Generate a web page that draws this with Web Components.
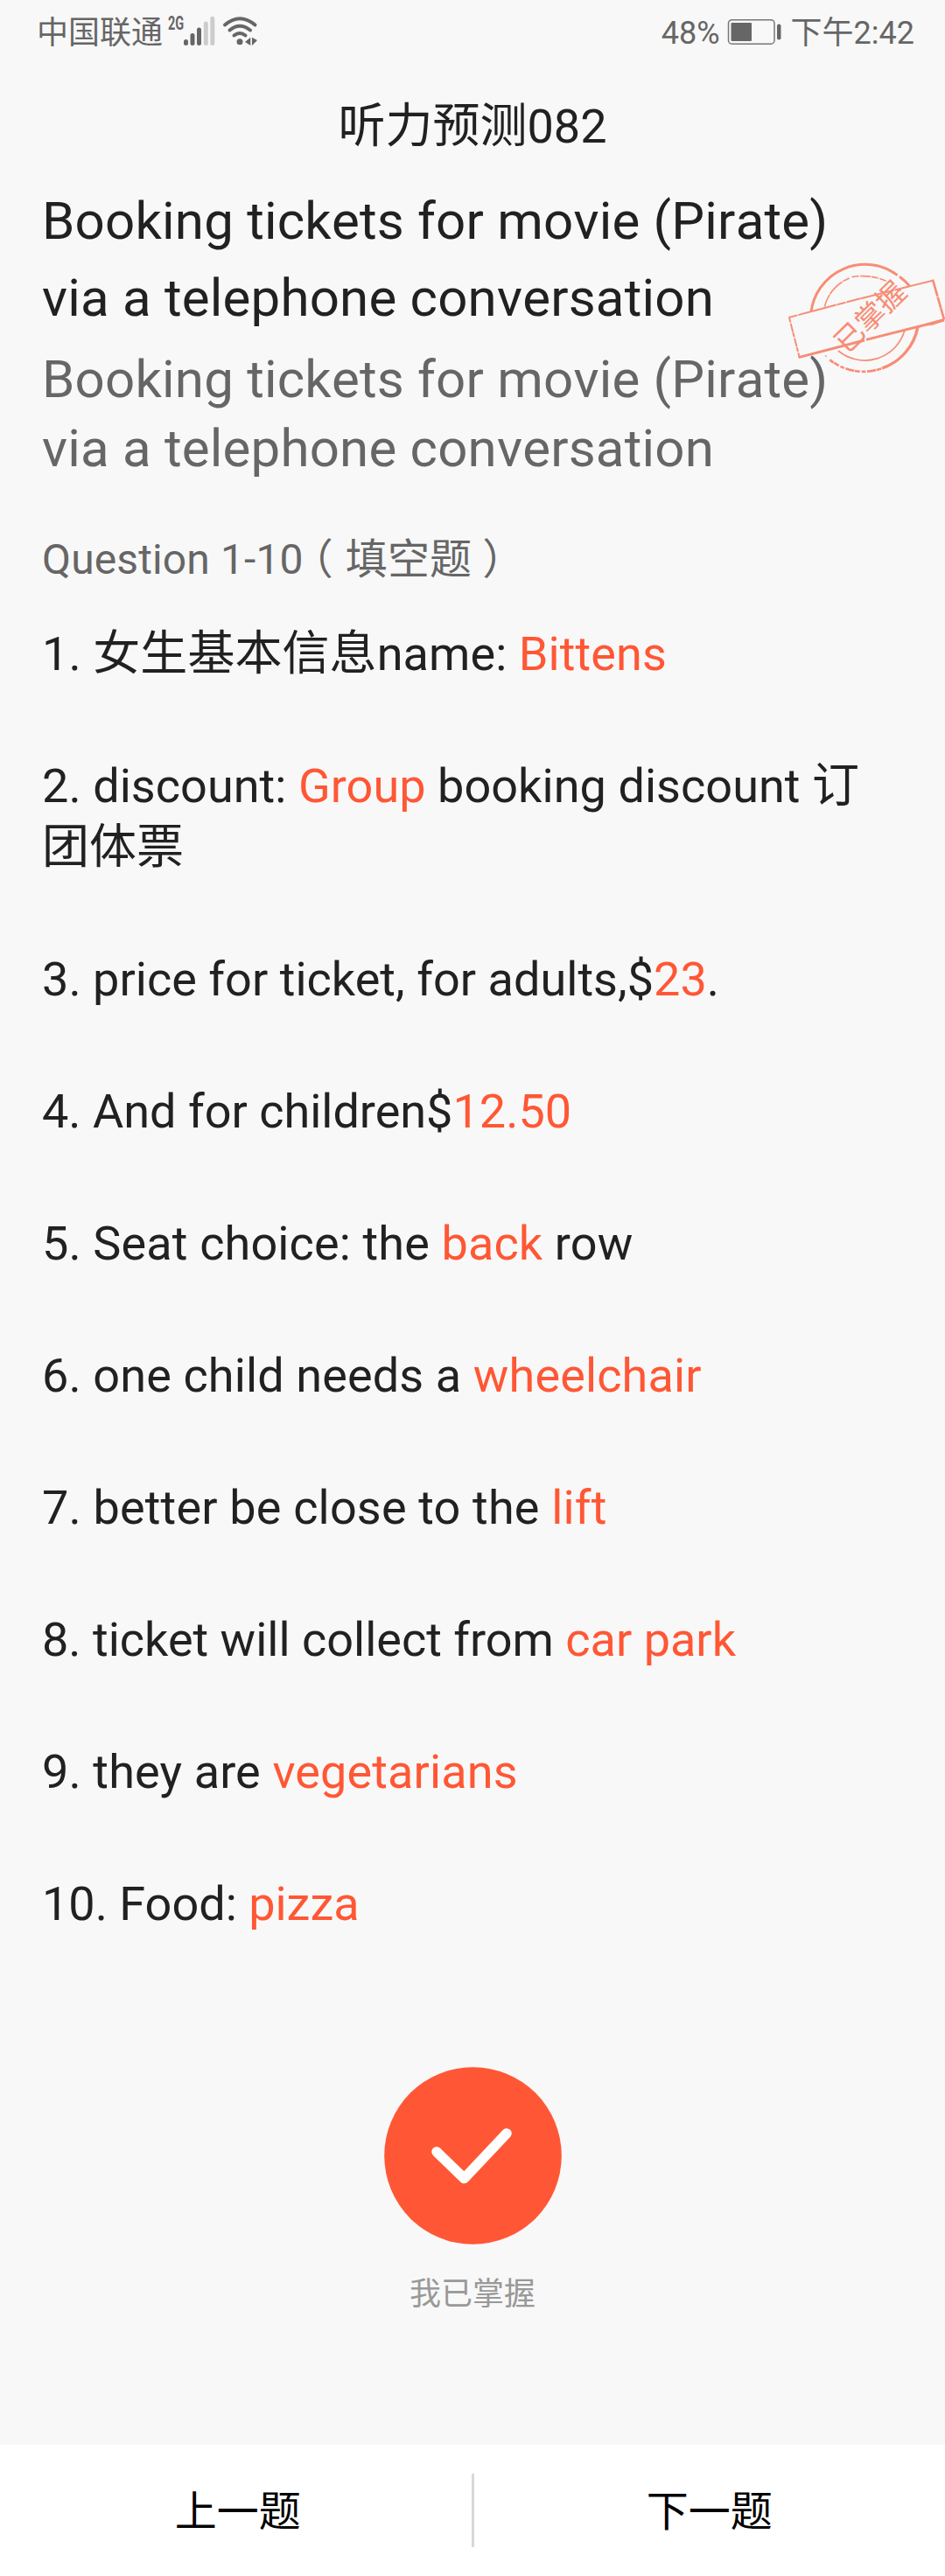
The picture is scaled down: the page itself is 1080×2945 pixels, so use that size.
<!DOCTYPE html>
<html lang="zh-CN">
<head>
<meta charset="utf-8">
<title>听力预测082</title>
<style>
  body {
    margin: 0;
    background: #f8f8f8;
    color: #212121;
    font-family: Roboto, "Noto Sans CJK SC", sans-serif;
  }
</style>
</head>
<body>
<listening-page>
  <status-bar slot="status" carrier="中国联通" battery="48%" time="下午2:42"></status-bar>
  <page-title slot="title">听力预测082</page-title>
  <topic-header>
    <span slot="main">Booking tickets for movie (Pirate) via a telephone conversation</span>
    <span slot="sub">Booking tickets for movie (Pirate) via a telephone conversation</span>
    <mastered-stamp slot="stamp">已掌握</mastered-stamp>
  </topic-header>
  <question-list range="Question 1-10" kind="填空题">
    <question-item tracking="0.08">1. 女生基本信息name: <answer-text>Bittens</answer-text></question-item>
    <question-item tracking="0.05">2. discount: <answer-text>Group</answer-text> booking discount 订团体票</question-item>
    <question-item tracking="0.03">3. price for ticket, for adults,$<answer-text>23</answer-text>.</question-item>
    <question-item>4. And for children$<answer-text>12.50</answer-text></question-item>
    <question-item tracking="0.13">5. Seat choice: the <answer-text>back</answer-text> row</question-item>
    <question-item tracking="0.12">6. one child needs a <answer-text>wheelchair</answer-text></question-item>
    <question-item tracking="0.17">7. better be close to the <answer-text>lift</answer-text></question-item>
    <question-item>8. ticket will collect from <answer-text>car park</answer-text></question-item>
    <question-item tracking="0.13">9. they are <answer-text>vegetarians</answer-text></question-item>
    <question-item>10. Food: <answer-text>pizza</answer-text></question-item>
  </question-list>
  <master-button>我已掌握</master-button>
  <pager-bar slot="footer">
    <span slot="prev">上一题</span>
    <span slot="next">下一题</span>
  </pager-bar>
</listening-page>

<script>
class ListeningPage extends HTMLElement {
  constructor() {
    super();
    this.attachShadow({ mode: "open" });
  }

  connectedCallback() {
    this.shadowRoot.innerHTML = `
      <style>
        :host { display: flex; flex-direction: column; height: 2945px; overflow: hidden; }
        main { flex: 1; padding: 24px 48px 0; }
      </style>
      <slot name="status"></slot>
      <slot name="title"></slot>
      <main><slot></slot></main>
      <slot name="footer"></slot>
    `;
  }
}

class StatusBar extends HTMLElement {
  constructor() {
    super();
    this.attachShadow({ mode: "open" });
  }

  connectedCallback() {
    this.shadowRoot.innerHTML = `
      <style>
        :host {
          display: flex; justify-content: space-between; box-sizing: border-box;
          height: 80px; padding: 0 35px 4px 42px; color: #666; font-size: 36px; line-height: 76px;
        }
        div { display: flex; }
        svg { display: block; }
        .net { font: 700 22px/22px Roboto, sans-serif; margin: 16px 0 0 6px; width: 18px; }
        .net span { display: block; transform: scaleX(.66); transform-origin: 0 0; }
      </style>
      <div>
        <span>${this.getAttribute("carrier")}</span>
        <span class="net"><span>2G</span></span>
        <svg width="88" height="74" viewBox="210 0 88 74">
          <g stroke="#666" stroke-width="5" stroke-linecap="round" fill="none">
            <path d="M212.500 47.500v2M220 40.500v9M227.500 34v15.500"/>
            <path stroke="#ccc" d="M235.300 27v22.500M242.800 21.300v28.200"/>
            <path stroke-width="4" d="M257 28.500Q274 14 291.500 28.500M262.500 34.500Q274 25 286 34.500M267.500 40.500Q274 35.500 280.500 40.500"/>
          </g>
          <circle cx="274" cy="47.800" r="3.500" fill="#666"/>
          <path fill="#666" d="M286.300 42.800v9.200l-6.300-4zM288 42.800v9.200l6-6z"/>
        </svg>
      </div>
      <div>
        <span>${this.getAttribute("battery")}</span>
        <svg width="81" height="74" viewBox="823 0 81 74">
          <rect x="832.500" y="22.700" width="52.500" height="27.500" rx="4" fill="none" stroke="#777" stroke-width="1.500"/>
          <rect x="835.500" y="26" width="23.500" height="21" rx="1" fill="#666"/>
          <rect x="888" y="27.500" width="4.500" height="18" rx="2.200" fill="#666"/>
        </svg>
        <span>${this.getAttribute("time")}</span>
      </div>
    `;
  }
}

class PageTitle extends HTMLElement {
  constructor() {
    super();
    this.attachShadow({ mode: "open" });
  }

  connectedCallback() {
    this.shadowRoot.innerHTML = `
      <style>
        :host { display: block; height: 105px; font-size: 54px; line-height: 129px; text-align: center; }
      </style>
      <slot></slot>
    `;
  }
}

class TopicHeader extends HTMLElement {
  constructor() {
    super();
    this.attachShadow({ mode: "open" });
  }

  connectedCallback() {
    this.shadowRoot.innerHTML = `
      <style>
        :host { display: block; position: relative; font-size: 60px; font-kerning: none; letter-spacing: .2px; }
        h1, h2 { margin: 0; max-width: 930px; font-size: inherit; font-weight: 400; }
        h1 { line-height: 87.500px; }
        h2 { line-height: 79px; margin-top: 9.500px; color: #666; }
      </style>
      <h1><slot name="main"></slot></h1>
      <h2><slot name="sub"></slot></h2>
      <slot name="stamp"></slot>
    `;
  }
}

class MasteredStamp extends HTMLElement {
  constructor() {
    super();
    this.attachShadow({ mode: "open" });
  }

  connectedCallback() {
    // sits over the right edge of the header
    this.shadowRoot.innerHTML = `
      <style>
        :host { display: block; position: absolute; right: -48px; top: 71px; width: 200px; height: 160px; letter-spacing: 0; }
        svg { display: block; }
        text { font-size: 33px; fill: #f78d76; text-anchor: middle; }
      </style>
      <svg width="200" height="160" viewBox="0 0 600 480" fill="none" stroke="#f78d76">
        <g stroke-linecap="butt">
          <path stroke-width="9" d="M141 230A186 186 0 0 1 437 104M444 109Q464 123 480 143"/>
          <path stroke-width="5" d="M187 212A142 142 0 0 1 272 114" stroke-dasharray="45 2 60 3"/>
          <path stroke-width="5" d="M281 110Q342 99 398 124" stroke-dasharray="24 5 35 3"/>
          <path stroke-width="10" d="M507 280A186 186 0 0 1 384 423"/>
          <path stroke-width="8" d="M382 424A186 186 0 0 1 205 394" stroke-dasharray="18 2 30 5 14 6"/>
          <path stroke-width="5" d="M462 292A142 142 0 0 1 234 363"/>
        </g>
        <path stroke-width="6" d="M64 249L298 187L558 122" stroke-dasharray="31 3 50 1 84 2"/>
        <path stroke-width="8" d="M558 119L597 256" stroke-dasharray="60 2 40 1"/>
        <path stroke-width="9" d="M597 258L330 325M324 327L98 386"/>
        <path stroke-width="6" d="M66 250L101 386" stroke-dasharray="16 4 30 2"/>
        <path stroke-width="1" fill="#f78d76" d="M535 270L598 252L596 261L556 275L538 276z"/>
        <path stroke-width="4" d="M189 380l5 3"/>
        <text stroke="none" transform="translate(343 246) rotate(-44.500) scale(3)" y="12">${this.textContent}</text>
      </svg>
    `;
  }
}

class QuestionList extends HTMLElement {
  constructor() {
    super();
    this.attachShadow({ mode: "open" });
  }

  connectedCallback() {
    this.shadowRoot.innerHTML = `
      <style>
        :host { display: block; margin-top: 60px; }
        h3 {
          margin: 0 0 45px; font-size: 48px; font-weight: 400; line-height: 56px;
          color: #666; letter-spacing: .12px;
        }
        /* half-width brackets centred in a full-width cell */
        i { font-style: normal; font-feature-settings: "halt"; margin: 0 14px 0 10px; }
        i + i { margin: 0 12px; }
        .items { display: flex; flex-direction: column; gap: 81px; }
      </style>
      <h3>${this.getAttribute("range")}<i>（</i>${this.getAttribute("kind")}<i>）</i></h3>
      <div class="items"><slot></slot></div>
    `;
  }
}

class QuestionItem extends HTMLElement {
  constructor() {
    super();
    this.attachShadow({ mode: "open" });
  }

  connectedCallback() {
    const tracking = this.getAttribute("tracking") || 0;
    this.shadowRoot.innerHTML = `
      <style>
        :host { display: block; font-size: 54px; line-height: 70px; letter-spacing: ${tracking}px; }
      </style>
      <slot></slot>
    `;
  }
}

class AnswerText extends HTMLElement {
  constructor() {
    super();
    this.attachShadow({ mode: "open" });
  }

  connectedCallback() {
    // no whitespace around the slot, the answer runs inline
    this.shadowRoot.innerHTML = `<style>:host { display: inline; color: #ff5735; }</style><slot></slot>`;
  }
}

class MasterButton extends HTMLElement {
  constructor() {
    super();
    this.attachShadow({ mode: "open" });
  }

  connectedCallback() {
    this.shadowRoot.innerHTML = `
      <style>
        :host {
          display: flex; flex-direction: column; align-items: center; gap: 36px;
          margin-top: 151px; color: #999; font-size: 36px; line-height: 42px;
        }
        svg { display: block; }
      </style>
      <svg width="203" height="203" viewBox="0 0 203 203">
        <circle cx="101.500" cy="101.500" r="101.300" fill="#ff5735"/>
        <path d="M60 97L91.500 127.500L140 76" fill="none" stroke="#fff" stroke-width="11.500" stroke-linecap="round" stroke-linejoin="round"/>
      </svg>
      <span><slot></slot></span>
    `;
  }
}

class PagerBar extends HTMLElement {
  constructor() {
    super();
    this.attachShadow({ mode: "open" });
  }

  connectedCallback() {
    this.shadowRoot.innerHTML = `
      <style>
        :host {
          display: flex; align-items: center; height: 150px; background: #fff;
          color: #000; font-size: 48px; line-height: 60px; text-align: center;
        }
        div { flex: 1; padding-top: 3px; }
        div:first-of-type { text-indent: 5px; }
        hr { width: 3px; height: 84px; margin: 0; border: 0; background: #d8d8d8; }
      </style>
      <div><slot name="prev"></slot></div>
      <hr>
      <div><slot name="next"></slot></div>
    `;
  }
}

customElements.define("listening-page", ListeningPage);
customElements.define("status-bar", StatusBar);
customElements.define("page-title", PageTitle);
customElements.define("topic-header", TopicHeader);
customElements.define("mastered-stamp", MasteredStamp);
customElements.define("question-list", QuestionList);
customElements.define("question-item", QuestionItem);
customElements.define("answer-text", AnswerText);
customElements.define("master-button", MasterButton);
customElements.define("pager-bar", PagerBar);
</script>
</body>
</html>
